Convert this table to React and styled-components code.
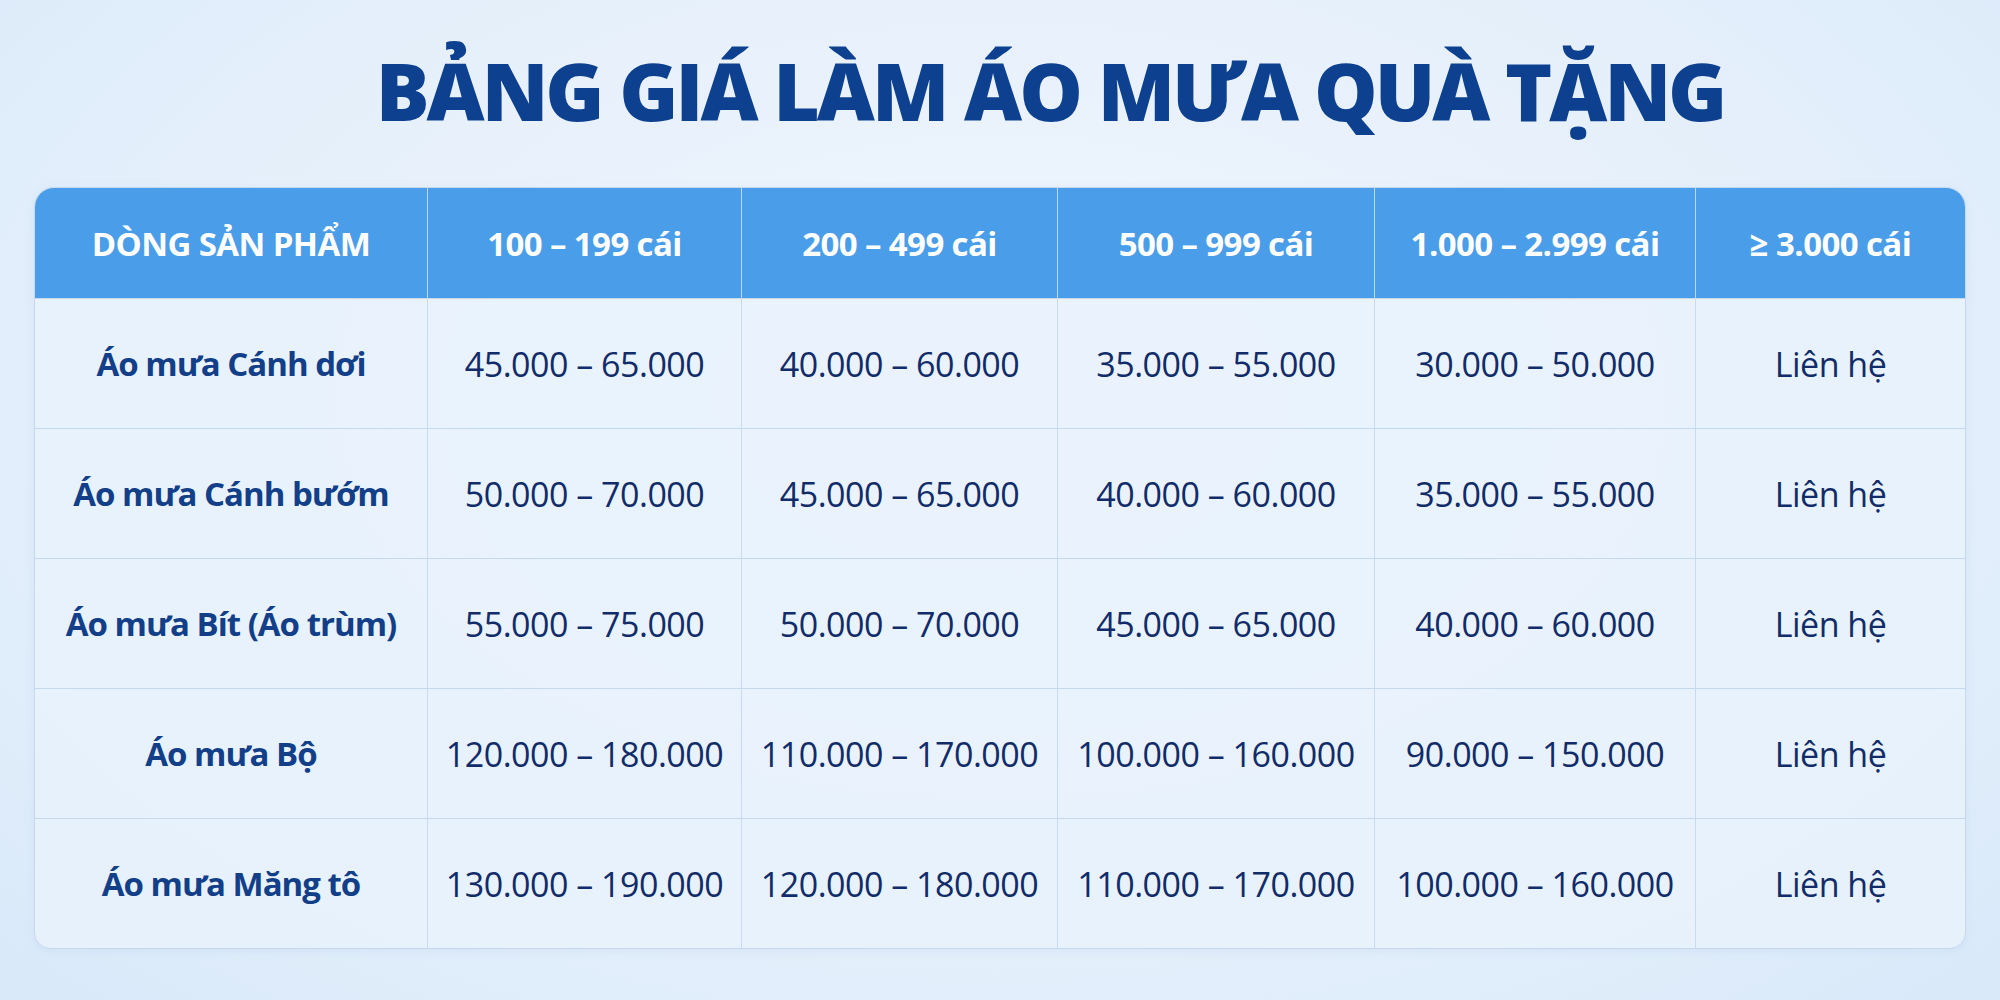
import React from "react";
import styled, { createGlobalStyle } from "styled-components";

const GlobalStyle = createGlobalStyle`
  html, body { margin: 0; padding: 0; }
  body { font-family: "Open Sans", "Noto Sans", sans-serif; }
`;

const Page = styled.div`
  min-height: 1000px;
  box-sizing: border-box;
  padding: 50px 35px 0 35px;
  background:
    radial-gradient(ellipse at 50% 40%, #f0f6fe 0%, #e6f0fb 55%, #d9e9f9 100%);
  display: flex;
  flex-direction: column;
  align-items: center;
`;

const Title = styled.h1`
  margin: 0 0 57px 0;
  padding-left: 100px;
  font-family: "Open Sans", "Noto Sans", sans-serif;
  font-weight: 800;
  font-size: 80px;
  line-height: 1;
  color: #0d4190;
  letter-spacing: -3px;
  white-space: nowrap;
`;

const Table = styled.div`
  width: 1930px;
  display: grid;
  grid-template-columns: 392px 314px 316px 317px 321px 270px;
  border: 1px solid #c6d8ee;
  border-radius: 20px 20px 16px 16px;
  overflow: hidden;
  background: rgba(232, 242, 253, 0.8);
  box-shadow: 0 2px 10px rgba(80, 130, 200, 0.08);
`;

const HeadCell = styled.div`
  height: 110px;
  display: flex;
  align-items: center;
  justify-content: center;
  background: #4a9de8;
  color: #ffffff;
  font-family: "Open Sans", "Noto Sans", sans-serif;
  font-weight: 700;
  font-size: 33px;
  letter-spacing: -0.6px;
  border-left: ${(p) => (p.$first ? "none" : "1.5px solid #b9d8f6")};
  box-sizing: border-box;
`;

const Cell = styled.div`
  height: 130px;
  display: flex;
  align-items: center;
  justify-content: center;
  box-sizing: border-box;
  border-top: 1.5px solid #c6d8ee;
  border-left: ${(p) => (p.$first ? "none" : "1.5px solid #cadbef")};
  font-family: "Open Sans", "Noto Sans", sans-serif;
  font-size: ${(p) => (p.$first ? "33px" : "34px")};
  letter-spacing: ${(p) => (p.$first ? "-1px" : "-0.5px")};
  font-weight: ${(p) => (p.$first ? 700 : 400)};
  color: ${(p) => (p.$first ? "#123f88" : "#112c68")};
  white-space: nowrap;
`;

const headers = [
  "DÒNG SẢN PHẨM",
  "100 – 199 cái",
  "200 – 499 cái",
  "500 – 999 cái",
  "1.000 – 2.999 cái",
  "≥ 3.000 cái",
];

const rows = [
  ["Áo mưa Cánh dơi", "45.000 – 65.000", "40.000 – 60.000", "35.000 – 55.000", "30.000 – 50.000", "Liên hệ"],
  ["Áo mưa Cánh bướm", "50.000 – 70.000", "45.000 – 65.000", "40.000 – 60.000", "35.000 – 55.000", "Liên hệ"],
  ["Áo mưa Bít (Áo trùm)", "55.000 – 75.000", "50.000 – 70.000", "45.000 – 65.000", "40.000 – 60.000", "Liên hệ"],
  ["Áo mưa Bộ", "120.000 – 180.000", "110.000 – 170.000", "100.000 – 160.000", "90.000 – 150.000", "Liên hệ"],
  ["Áo mưa Măng tô", "130.000 – 190.000", "120.000 – 180.000", "110.000 – 170.000", "100.000 – 160.000", "Liên hệ"],
];

export default function App() {
  return (
    <>
      <GlobalStyle />
      <Page>
        <Title>BẢNG GIÁ LÀM ÁO MƯA QUÀ TẶNG</Title>
        <Table>
          {headers.map((h, i) => (
            <HeadCell key={h} $first={i === 0}>
              {h}
            </HeadCell>
          ))}
          {rows.map((r) =>
            r.map((c, i) => (
              <Cell key={r[0] + i} $first={i === 0}>
                {c}
              </Cell>
            ))
          )}
        </Table>
      </Page>
    </>
  );
}
